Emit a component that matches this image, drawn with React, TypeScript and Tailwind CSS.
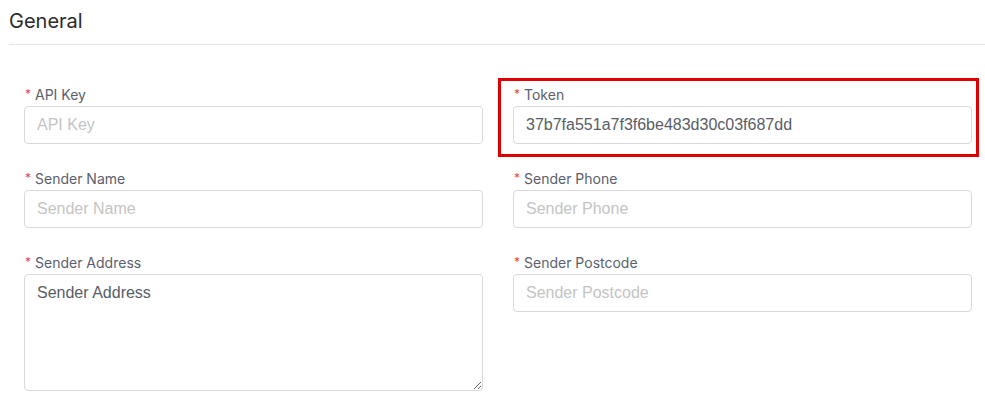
import React from "react";

type Field = {
  label: string;
  placeholder: string;
  value?: string;
  textarea?: boolean;
  highlight?: boolean;
};

const fields: Field[] = [
  { label: "API Key", placeholder: "API Key" },
  { label: "Token", placeholder: "Token", value: "37b7fa551a7f3f6be483d30c03f687dd", highlight: true },
  { label: "Sender Name", placeholder: "Sender Name" },
  { label: "Sender Phone", placeholder: "Sender Phone" },
  { label: "Sender Address", placeholder: "Sender Address", value: "Sender Address", textarea: true },
  { label: "Sender Postcode", placeholder: "Sender Postcode" },
];

function FormItem({ field }: { field: Field }) {
  const inputCls =
    "w-full border border-[#d9d9d9] rounded-[4px] bg-white px-[12px] text-[16px] text-[#585d66] placeholder:text-[#c4c4c4] outline-none font-['Liberation_Sans',Arial,sans-serif]";
  return (
    <div className="relative px-[15px] mb-[24px]">
      {field.highlight && (
        <div className="absolute left-0 top-[-6px] w-[481px] h-[79px] border-[3px] border-[#e00000] pointer-events-none" />
      )}
      <label className="flex items-center h-[22px] pb-[2px] text-[14px] text-[#5a606d] font-['Inter',sans-serif]">
        <span className="text-[#e5484d] text-[12px] mr-[4px] ml-[1px]">*</span>
        {field.label}
      </label>
      {field.textarea ? (
        <textarea
          className={`${inputCls} h-[117px] pt-[8px] leading-[20px] resize-y block`}
          placeholder={field.placeholder}
          defaultValue={field.value}
        />
      ) : (
        <input
          className={`${inputCls} h-[38px] block`}
          placeholder={field.placeholder}
          defaultValue={field.value}
        />
      )}
    </div>
  );
}

export default function App() {
  const left = fields.filter((_, i) => i % 2 === 0);
  const right = fields.filter((_, i) => i % 2 === 1);
  return (
    <div className="w-[985px] h-[407px] bg-white overflow-hidden">
      <div className="pl-[9px]">
        <h2 className="h-[45px] pt-[7px] border-b border-[#e4e4e4] text-[20px] leading-[28px] text-[#2b2b2b] font-['Inter',sans-serif]">
          General
        </h2>
        <div className="grid grid-cols-2 w-[978px] pt-[39px]">
          <div>
            {left.map((f) => (
              <FormItem key={f.label} field={f} />
            ))}
          </div>
          <div>
            {right.map((f) => (
              <FormItem key={f.label} field={f} />
            ))}
          </div>
        </div>
      </div>
    </div>
  );
}
